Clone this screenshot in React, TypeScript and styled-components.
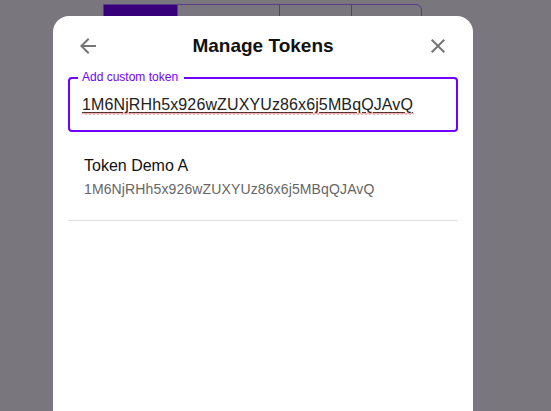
import React from "react";
import styled, { createGlobalStyle } from "styled-components";

const Global = createGlobalStyle`
  html, body { margin: 0; padding: 0; }
  body {
    background: #79767d;
    font-family: "Liberation Sans", Arial, sans-serif;
    width: 551px;
    height: 411px;
    overflow: hidden;
  }
`;

const Page = styled.div`
  position: relative;
  width: 551px;
  height: 411px;
  padding-top: 4px;
  box-sizing: border-box;
  overflow: hidden;
`;

const TabBar = styled.div`
  display: flex;
  margin-left: 103px;
  width: 319px;
  height: 40px;
  box-sizing: border-box;
  border: 1px solid #5a3a8c;
  border-radius: 0 6px 0 0;
  overflow: hidden;
`;

const Tab = styled.div<{ $w: number; $active?: boolean }>`
  width: ${(p) => p.$w}px;
  flex: none;
  background: ${(p) => (p.$active ? "#37007a" : "transparent")};
  & + & {
    border-left: 1px solid #5a3a8c;
  }
`;

const Dialog = styled.div`
  position: absolute;
  left: 53px;
  top: 16px;
  bottom: 0;
  width: 420px;
  background: #fff;
  border-radius: 16px 16px 0 0;
  padding: 0 15px;
  box-sizing: border-box;
  display: flex;
  flex-direction: column;
`;

const Header = styled.div`
  display: flex;
  align-items: center;
  justify-content: space-between;
  height: 60px;
  padding: 0 8px;
`;

const IconButton = styled.button`
  width: 24px;
  height: 24px;
  padding: 0;
  border: none;
  background: none;
  display: flex;
  align-items: center;
  justify-content: center;
  cursor: pointer;
  svg {
    fill: #757575;
    width: 24px;
    height: 24px;
  }
`;

const Title = styled.h2`
  margin: 0;
  font-size: 19px;
  font-weight: 700;
  color: #111;
`;

const Field = styled.div`
  position: relative;
  margin-top: 1px;
  height: 55px;
  border: 2px solid #7000ff;
  border-radius: 4px;
  box-sizing: border-box;
  display: flex;
  align-items: center;
  padding: 0 12px;
`;

const Label = styled.span`
  position: absolute;
  left: 8px;
  top: -9px;
  padding: 0 6px 0 4px;
  background: #fff;
  font-size: 12px;
  line-height: 14px;
  color: #7000ff;
`;

const Input = styled.input`
  border: none;
  outline: none;
  padding: 0;
  width: 100%;
  font-family: inherit;
  font-size: 16px;
  letter-spacing: 0.12px;
  color: #222;
  text-decoration: underline;
  text-decoration-color: #333;
  text-underline-offset: 2px;
  background: transparent;
`;

const Squiggle = styled.svg`
  position: absolute;
  left: 12px;
  top: 33px;
  width: 332px;
  height: 3px;
`;

const List = styled.ul`
  list-style: none;
  margin: 10px 0 0;
  padding: 0;
`;

const Item = styled.li`
  padding: 12px 16px 20px;
  border-bottom: 1px solid #e0e0e0;
`;

const Name = styled.div`
  font-size: 16px;
  line-height: 24px;
  color: #111;
`;

const Address = styled.div`
  font-size: 14px;
  line-height: 22px;
  letter-spacing: 0.13px;
  color: #666;
`;

const token = "1M6NjRHh5x926wZUXYUz86x6j5MBqQJAvQ";

export default function App() {
  return (
    <>
      <Global />
      <Page>
        <TabBar>
          <Tab $w={73} $active />
          <Tab $w={101} />
          <Tab $w={71} />
          <Tab $w={69} />
        </TabBar>
        <Dialog>
          <Header>
            <IconButton aria-label="back">
              <svg viewBox="0 0 24 24">
                <path d="M20 11H7.83l5.59-5.59L12 4l-8 8 8 8 1.41-1.41L7.83 13H20v-2z" />
              </svg>
            </IconButton>
            <Title>Manage Tokens</Title>
            <IconButton aria-label="close">
              <svg viewBox="0 0 24 24">
                <path d="M19 6.41 17.59 5 12 10.59 6.41 5 5 6.41 10.59 12 5 17.59 6.41 19 12 13.41 17.59 19 19 17.59 13.41 12z" />
              </svg>
            </IconButton>
          </Header>
          <Field>
            <Label>Add custom token</Label>
            <Input defaultValue={token} spellCheck={false} />
            <Squiggle viewBox="0 0 332 3" preserveAspectRatio="none">
              <polyline
                fill="none"
                stroke="#e53935"
                strokeWidth="0.8"
                points={Array.from({ length: 167 }, (_, i) => `${i * 2},${i % 2 ? 0.5 : 2.5}`).join(" ")}
              />
            </Squiggle>
          </Field>
          <List>
            <Item>
              <Name>Token Demo A</Name>
              <Address>{token}</Address>
            </Item>
          </List>
        </Dialog>
      </Page>
    </>
  );
}
